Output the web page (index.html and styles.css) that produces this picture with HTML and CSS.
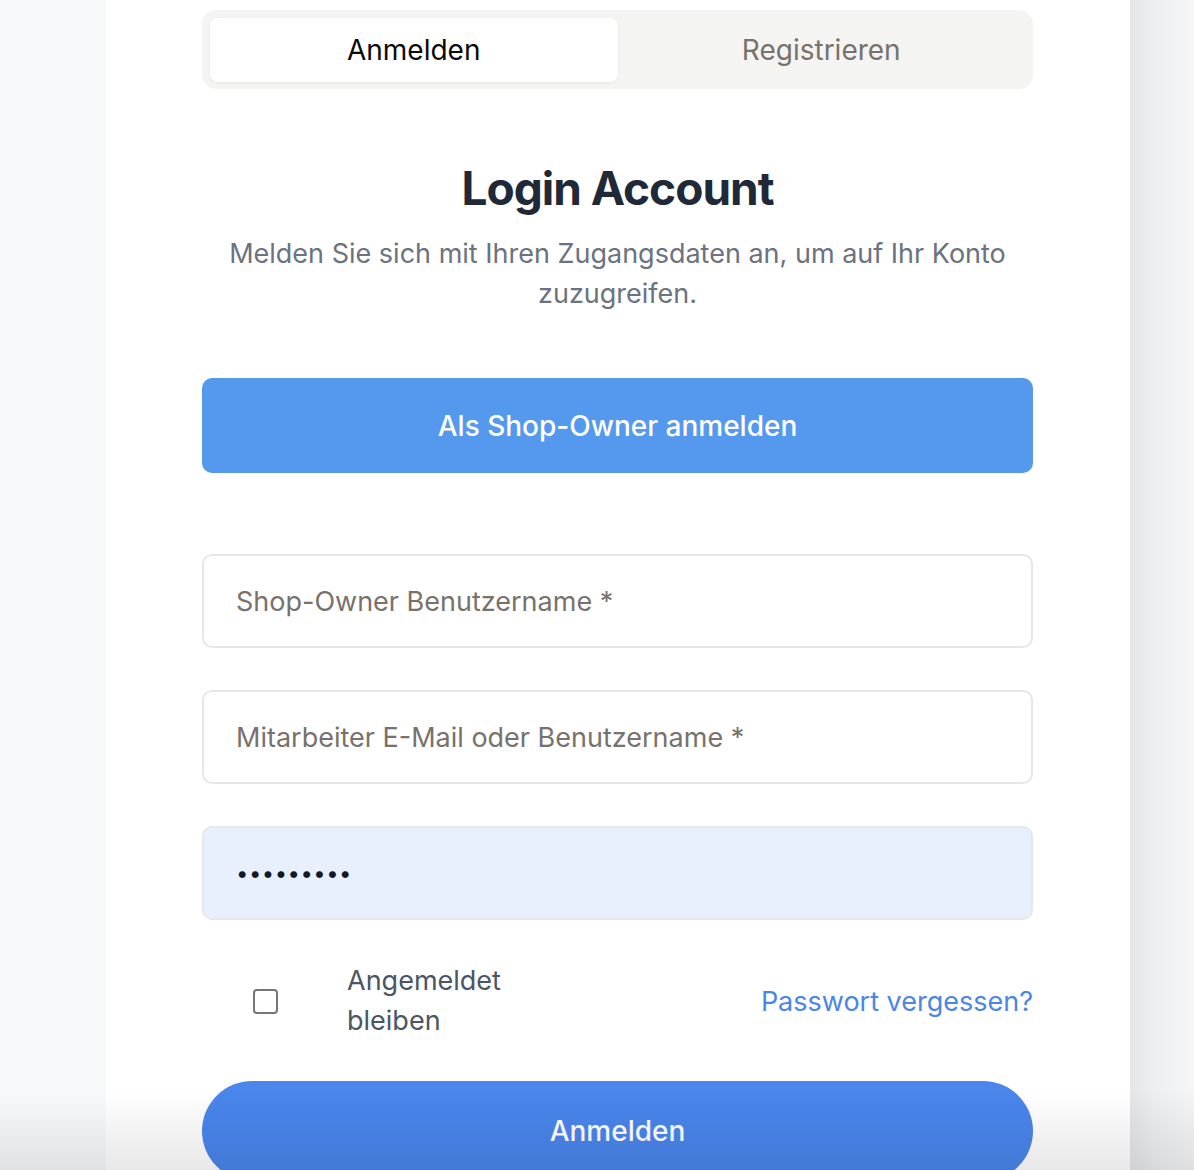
FILE: index.html
```html
<!DOCTYPE html>
<html lang="de">
<head>
<meta charset="utf-8">
<title>Login Account</title>
<link rel="stylesheet" href="styles.css">
</head>
<body>
<div class="gutter-left"></div>
<main class="card">
  <div class="tabs">
    <button class="tab tab-active" type="button">Anmelden</button>
    <button class="tab" type="button">Registrieren</button>
  </div>
  <h1 class="title">Login Account</h1>
  <p class="subtitle">Melden Sie sich mit Ihren Zugangsdaten an, um auf Ihr Konto zuzugreifen.</p>
  <button class="owner-btn" type="button">Als Shop-Owner anmelden</button>
  <form class="form">
    <input class="field" type="text" placeholder="Shop-Owner Benutzername *">
    <input class="field" type="text" placeholder="Mitarbeiter E-Mail oder Benutzername *">
    <input class="field field-filled" type="password" value="123456789">
    <div class="options">
      <label class="remember">
        <span class="check"></span>
        <span class="remember-text">Angemeldet bleiben</span>
      </label>
      <a class="forgot" href="#">Passwort vergessen?</a>
    </div>
    <button class="submit" type="button">Anmelden</button>
  </form>
</main>
<div class="gutter-right"></div>
<div class="bottom-fade"></div>
</body>
</html>
```
FILE: styles.css
```css
* { box-sizing: border-box; }
html, body { height: 100%; }
body {
  margin: 0;
  display: flex;
  background: #f8f9fb;
  font-family: Inter, "Noto Sans", sans-serif;
  overflow: hidden;
}
.gutter-left { width: 106px; flex: none; }
.gutter-right {
  flex: 1;
  background: linear-gradient(to right, #e4e5e8, #eeeff2 40%, #f5f6f8);
}
.card {
  width: 1024px;
  flex: none;
  background: #ffffff;
  padding: 10px 97px 0 96px;
  display: flex;
  flex-direction: column;
}
.card > *, .form > * { flex-shrink: 0; }
.tabs {
  height: 79px;
  background: #f4f4f3;
  border-radius: 14px;
  padding: 8px 8px 7px;
  display: grid;
  grid-template-columns: 1fr 1fr;
}
.tab {
  border: 0;
  background: transparent;
  font-family: inherit;
  font-size: 28px;
  font-weight: 400;
  color: #78716c;
  border-radius: 8px;
  padding: 0;
}
.tab-active {
  background: #ffffff;
  color: #0c0a09;
  box-shadow: 0 1px 3px rgba(0,0,0,0.06);
}
.title {
  margin: 70px 0 0;
  text-align: center;
  font-size: 46px;
  line-height: 58px;
  font-weight: 700;
  color: #1f2937;
  letter-spacing: -1px;
}
.subtitle {
  margin: 17px 0 0;
  text-align: center;
  font-size: 27px;
  line-height: 40px;
  color: #6b7280;
}
.owner-btn {
  margin-top: 64px;
  height: 95px;
  border: 0;
  border-radius: 10px;
  background: #5599ee;
  color: #ffffff;
  font-family: inherit;
  font-size: 28px;
  font-weight: 500;
}
.form {
  margin: 81px 0 0;
  display: flex;
  flex-direction: column;
  gap: 42px;
}
.field {
  height: 94px;
  border: 2px solid #e5e7eb;
  border-radius: 10px;
  padding: 0 32px;
  font-family: inherit;
  font-size: 27px;
  color: #111827;
  background: #ffffff;
}
.field::placeholder { color: #78716c; }
.field-filled { background: #e8f0fe; font-size: 22px; letter-spacing: 0.5px; }
.options {
  display: flex;
  align-items: center;
  justify-content: space-between;
  margin-top: -1px;
}
.remember {
  display: flex;
  align-items: center;
}
.check {
  width: 25px;
  height: 25px;
  margin-left: 51px;
  border: 2px solid #767676;
  border-radius: 4px;
  background: #ffffff;
}
.remember-text {
  margin-left: 69px;
  width: 170px;
  font-size: 27px;
  line-height: 40px;
  color: #4b5563;
}
.forgot {
  font-size: 27px;
  color: #4a86e8;
  text-decoration: none;
}
.submit {
  margin-top: -2px;
  height: 100px;
  border: 0;
  border-radius: 60px;
  background: #4a86ec;
  color: #ffffff;
  font-family: inherit;
  font-size: 28px;
  font-weight: 500;
}
.bottom-fade {
  position: fixed;
  left: 0;
  right: 0;
  bottom: 0;
  height: 80px;
  pointer-events: none;
  background: linear-gradient(to bottom, rgba(0,0,0,0), rgba(0,0,0,0.09));
}
```
